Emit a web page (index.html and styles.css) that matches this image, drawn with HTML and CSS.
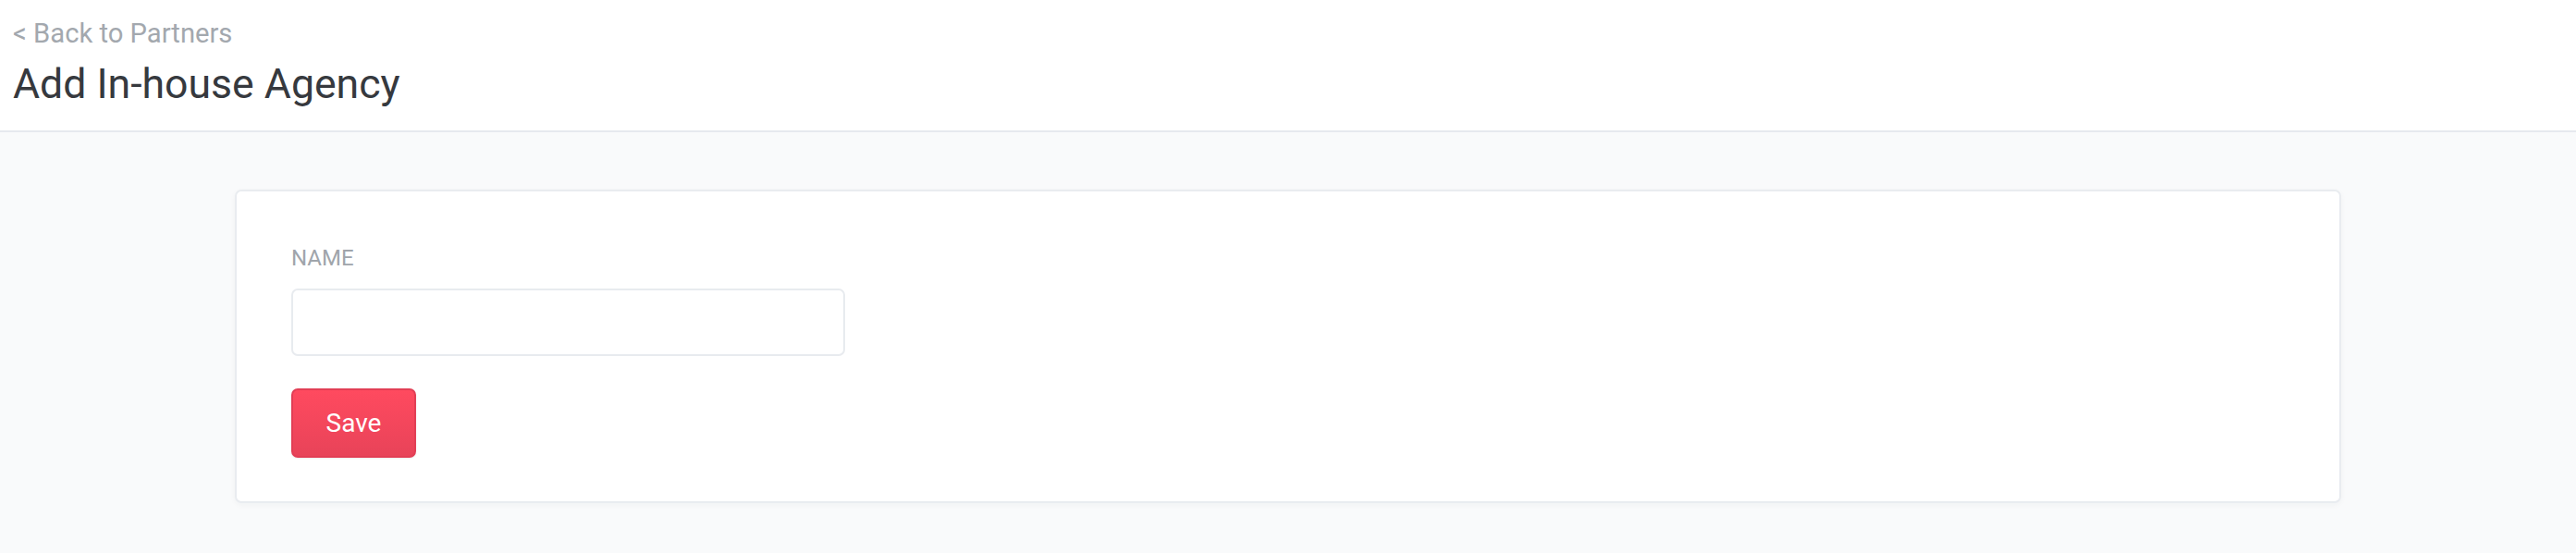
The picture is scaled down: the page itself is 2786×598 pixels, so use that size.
FILE: index.html
```html
<!DOCTYPE html>
<html lang="en">
<head>
    <meta charset="UTF-8">
    <meta name="viewport" content="width=device-width, initial-scale=1.0">
    <title>Add In-house Agency</title>
    <link rel="stylesheet" href="styles.css">
</head>
<body>
    <header class="page-header">
        <a class="back-link" href="#">&lt; Back to Partners</a>
        <h1 class="page-title">Add In-house Agency</h1>
    </header>

    <main class="page-main">
        <form class="card" onsubmit="return false">
            <label class="field-label" for="name">NAME</label>
            <input class="field-input" id="name" type="text">
            <button class="btn-save" type="submit">Save</button>
        </form>
    </main>
</body>
</html>
```

FILE: styles.css
```css
html, body {
    margin: 0;
    height: 100%;
}
body {
    background-color: #f9fafb;
    font-family: Roboto, 'Liberation Sans', sans-serif;
}
.page-header {
    background-color: #fff;
    border-bottom: 2px solid #e6e9ee;
    padding: 16px 14px 22px;
    display: flex;
    flex-direction: column;
    align-items: flex-start;
    gap: 7px;
}
.back-link {
    font-size: 29.2px;
    line-height: 40px;
    color: #a3a8ae;
    text-decoration: none;
}
.page-title {
    margin: 0;
    font-size: 44.6px;
    font-weight: 400;
    line-height: 56px;
    color: #36393e;
}
.page-main {
    padding: 62px 0;
}
.card {
    width: 2278px;
    margin: 0 auto;
    box-sizing: border-box;
    background-color: #fff;
    border: 2px solid #e9ecf0;
    border-radius: 7px;
    box-shadow: 0 2px 6px rgba(30, 40, 60, 0.04);
    padding: 54px 59px 47px;
    display: flex;
    flex-direction: column;
    align-items: flex-start;
}
.field-label {
    font-size: 24px;
    line-height: 36px;
    color: #a0a5ab;
}
.field-input {
    width: 599px;
    height: 73px;
    box-sizing: border-box;
    margin: 15px 0 35px;
    border: 2px solid #e8ebef;
    border-radius: 7px;
    background: #fff;
    font-family: inherit;
    font-size: 26px;
    padding: 0 18px;
    outline: none;
}
.btn-save {
    width: 135px;
    height: 75px;
    border: 2px solid #e23e55;
    border-radius: 7px;
    background: linear-gradient(#ff4a5f, #e84359);
    color: #fff;
    font-family: inherit;
    font-size: 28px;
    cursor: pointer;
    box-shadow: 0 1px 2px rgba(0, 0, 0, 0.08);
}
.btn-save:hover {
    background: linear-gradient(#f5435a, #dc3a51);
}
```
